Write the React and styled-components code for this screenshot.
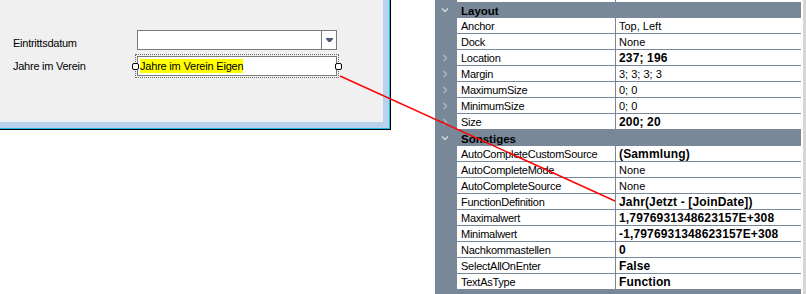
import React from 'react'
import styled, { createGlobalStyle } from 'styled-components'

const GlobalStyle = createGlobalStyle`
  html, body { margin: 0; padding: 0; background: #fff; }
  body {
    font-family: "Liberation Sans", Arial, sans-serif;
    font-size: 11px;
    color: #000;
  }
`

const SLATE = '#788899'

const Screen = styled.div`
  position: relative;
  width: 806px;
  height: 294px;
  overflow: hidden;
  display: flex;
  align-items: flex-start;
  background: #fff;
`

// designer form window (bottom right corner visible)
const WindowEdge = styled.div`
  border-right: 1px solid #000;
  border-bottom: 1px solid #000;
`
const WindowGlow = styled.div`
  border-right: 1px solid #1fb8e6;
  border-bottom: 1px solid #1fb8e6;
`
const WindowFrame = styled.div`
  border-right: 6px solid #b9d1ea;
  border-bottom: 6px solid #b9d1ea;
`
const FormClient = styled.div`
  width: 383px;
  height: 122px;
  box-sizing: border-box;
  background: #f0f0f0;
  padding: 30px 0 0 13px;
  display: grid;
  grid-template-columns: 124px 200px;
  grid-auto-rows: 20px;
  row-gap: 6px;
`
const FieldLabel = styled.div`
  line-height: 20px;
  letter-spacing: -0.25px;
  padding-top: ${p => p.offset || 0}px;
`
const ComboBox = styled.div`
  box-sizing: border-box;
  height: 20px;
  border: 1px solid #7a7a7a;
  background: #fff;
  display: flex;
  justify-content: flex-end;
`
const DropButton = styled.div`
  width: 14px;
  border-left: 1px solid #7a7a7a;
  display: flex;
  align-items: center;
  justify-content: center;
`
const Selection = styled.div`
  position: relative;
  outline: 1px dotted #6a6a6a;
  outline-offset: 1px;
`
const TextBox = styled.div`
  box-sizing: border-box;
  height: 20px;
  border: 1px solid #7a7a7a;
  background: #fff;
  padding-left: 2px;
  display: flex;
  align-items: center;
`
const Highlight = styled.span`
  background: #ffff00;
  line-height: 14px;
  letter-spacing: -0.2px;
`
const Handle = styled.div`
  position: absolute;
  top: 7px;
  ${p => (p.side === 'left' ? 'left: -5px;' : 'right: -5px;')}
  width: 7px;
  height: 7px;
  box-sizing: border-box;
  border: 1px solid #000;
  border-radius: 2px;
  background: #fff;
`

// property grid
const Grid = styled.div`
  width: 366px;
  margin-left: 44px;
  display: flex;
  flex-direction: column;
`
const Cols = styled.div`
  display: grid;
  grid-template-columns: 22px 158px 1px 185px;
`
const TopStrip = styled(Cols)`
  height: 2px;
  & > :nth-child(odd) { background: ${SLATE}; }
`
const PropRow = styled(Cols)`
  height: 16px;
  box-sizing: border-box;
  border-bottom: 1px solid ${SLATE};
`
const Gutter = styled.div`
  background: ${SLATE};
  display: flex;
  align-items: center;
  padding-left: 7px;
`
const Divider = styled.div`
  background: ${SLATE};
`
const NameCell = styled.div`
  padding: 1px 0 0 4px;
  line-height: 15px;
  height: 14px;
  letter-spacing: -0.25px;
  white-space: nowrap;
`
const ValueCell = styled.div`
  padding: 1px 0 0 3px;
  line-height: 15px;
  height: 14px;
  white-space: nowrap;
  font-weight: ${p => (p.bold ? 700 : 400)};
  font-size: ${p => (p.bold ? '12px' : '11px')};
  letter-spacing: ${p => (p.bold ? '0.15px' : '0')};
`
const CategoryRow = styled.div`
  height: 16px;
  background: ${SLATE};
  display: flex;
  align-items: center;
`
const CategoryChevron = styled.div`
  width: 22px;
  box-sizing: border-box;
  padding-left: 6px;
  display: flex;
  align-items: center;
`
const CategoryTitle = styled.div`
  padding: 1px 0 0 4px;
  font-weight: 700;
  font-size: 11.5px;
`
const ScrollTrack = styled.div`
  width: 3px;
  height: 294px;
  margin-left: 2px;
  background: #d6d6d6;
`
const Overlay = styled.svg`
  position: absolute;
  left: 0;
  top: 0;
  pointer-events: none;
`

const ChevronDown = () => (
  <svg width="8" height="6" viewBox="0 0 8 6">
    <path d="M1 1.5 L4 4.5 L7 1.5" fill="none" stroke="#d3d9df" strokeWidth="1.4" />
  </svg>
)
const ChevronRight = () => (
  <svg width="6" height="8" viewBox="0 0 6 8">
    <path d="M1.5 1 L4.5 4 L1.5 7" fill="none" stroke="#aab4bf" strokeWidth="1.4" />
  </svg>
)

const sections = [
  {
    title: 'Layout',
    rows: [
      { name: 'Anchor', value: 'Top, Left' },
      { name: 'Dock', value: 'None' },
      { name: 'Location', value: '237; 196', bold: true, expand: true },
      { name: 'Margin', value: '3; 3; 3; 3', expand: true },
      { name: 'MaximumSize', value: '0; 0', expand: true },
      { name: 'MinimumSize', value: '0; 0', expand: true },
      { name: 'Size', value: '200; 20', bold: true, expand: true },
    ],
  },
  {
    title: 'Sonstiges',
    rows: [
      { name: 'AutoCompleteCustomSource', value: '(Sammlung)', bold: true },
      { name: 'AutoCompleteMode', value: 'None' },
      { name: 'AutoCompleteSource', value: 'None' },
      { name: 'FunctionDefinition', value: 'Jahr(Jetzt - [JoinDate])', bold: true },
      { name: 'Maximalwert', value: '1,7976931348623157E+308', bold: true },
      { name: 'Minimalwert', value: '-1,7976931348623157E+308', bold: true },
      { name: 'Nachkommastellen', value: '0', bold: true },
      { name: 'SelectAllOnEnter', value: 'False', bold: true },
      { name: 'TextAsType', value: 'Function', bold: true },
    ],
  },
  { title: 'Verhalten', rows: [] },
]

export default function App() {
  return (
    <Screen>
      <GlobalStyle />
      <WindowEdge>
        <WindowGlow>
          <WindowFrame>
            <FormClient>
              <FieldLabel offset={3}>Eintrittsdatum</FieldLabel>
              <ComboBox>
                <DropButton>
                  <svg width="7" height="4" viewBox="0 0 7 4">
                    <polygon points="0,0 7,0 7,1 4.5,4 2.5,4 0,1" fill="#4b5a76" />
                  </svg>
                </DropButton>
              </ComboBox>
              <FieldLabel>Jahre im Verein</FieldLabel>
              <Selection>
                <TextBox>
                  <Highlight>Jahre im Verein Eigen</Highlight>
                </TextBox>
                <Handle side="left" />
                <Handle side="right" />
              </Selection>
            </FormClient>
          </WindowFrame>
        </WindowGlow>
      </WindowEdge>

      <Grid>
        <TopStrip>
          <div />
          <span />
          <div />
          <span />
        </TopStrip>
        {sections.map(section => (
          <React.Fragment key={section.title}>
            <CategoryRow>
              <CategoryChevron>
                <ChevronDown />
              </CategoryChevron>
              <CategoryTitle>{section.title}</CategoryTitle>
            </CategoryRow>
            {section.rows.map(row => (
              <PropRow key={row.name}>
                <Gutter>{row.expand && <ChevronRight />}</Gutter>
                <NameCell>{row.name}</NameCell>
                <Divider />
                <ValueCell bold={row.bold}>{row.value}</ValueCell>
              </PropRow>
            ))}
          </React.Fragment>
        ))}
      </Grid>
      <ScrollTrack />

      <Overlay width="806" height="294">
        <line x1="340" y1="76" x2="615" y2="201" stroke="#ff0000" strokeWidth="1.4" />
      </Overlay>
    </Screen>
  )
}
